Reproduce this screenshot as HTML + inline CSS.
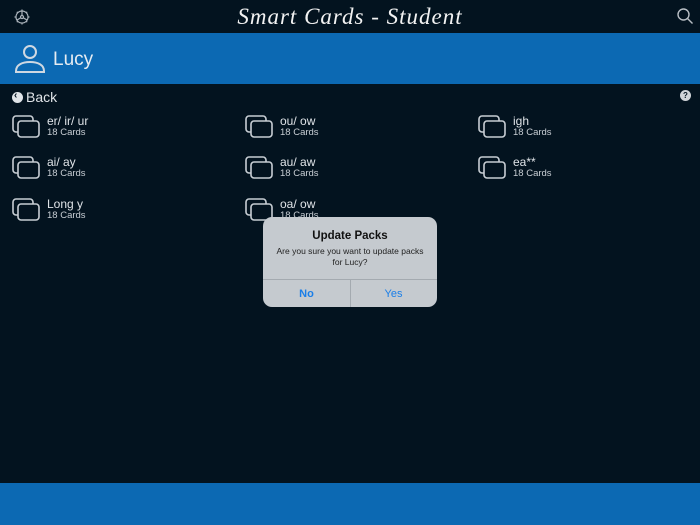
<!DOCTYPE html>
<html><head><style>
body{margin:0;width:700px;height:525px;background:#03131f;font-family:"Liberation Sans",sans-serif;position:relative;overflow:hidden;color:#d8dde2}
.a{position:absolute}
.item{position:absolute;height:30px}
.item svg{position:absolute;left:0;top:0}
.item .t{position:absolute;left:35px;top:1px;font-size:12px;color:#e0e4e8;white-space:nowrap}
.item .s{position:absolute;left:35px;top:14px;font-size:9.5px;color:#c8ced4;white-space:nowrap}
</style></head><body>
<svg class="a" style="left:13px;top:8px" width="18" height="18" viewBox="0 0 18 18" fill="none" stroke="#aab2ba" stroke-width="1.2"><circle cx="9" cy="9" r="6"/><circle cx="9" cy="9" r="1.5"/><path d="M9 3v-1.5M9 16.5V15M3 9H1.5M16.5 9H15M4.8 4.8l-1-1M14.2 14.2l-1-1M4.8 13.2l-1 1M14.2 3.8l-1 1M9 7.5L9 3M7.7 9.8L4 12M10.3 9.8L14 12"/></svg>
<div class="a" style="left:0;width:700px;top:4px;text-align:center;font-family:'Liberation Serif',serif;font-style:italic;font-size:23px;color:#f2f2f2;letter-spacing:1px">Smart Cards - Student</div>
<svg class="a" style="left:676px;top:7px" width="18" height="18" viewBox="0 0 18 18" fill="none" stroke="#b8bec4" stroke-width="1.4"><circle cx="7.5" cy="7.5" r="5.5"/><path d="M11.5 11.5l5 5"/></svg>
<div class="a" style="left:0;top:33px;width:700px;height:51px;background:#0c69b3"></div>
<svg class="a" style="left:14px;top:43px" width="32" height="32" viewBox="0 0 32 32" fill="none" stroke="#cfd8e2" stroke-width="2"><circle cx="16" cy="9" r="6"/><path d="M2 28c0-6 6-9 14-9s14 3 14 9v1H2z"/></svg>
<div class="a" style="left:53px;top:49px;font-size:19px;color:#e6ecf2">Lucy</div>
<div class="a" style="left:12px;top:92px;width:11px;height:11px;border-radius:50%;background:#e0e4e8"></div>
<div class="a" style="left:14px;top:90px;font-size:10px;color:#03131f;font-weight:bold">‹</div>
<div class="a" style="left:26px;top:89px;font-size:14px;color:#e0e4e8">Back</div>
<div class="a" style="left:680px;top:90px;width:11px;height:11px;border-radius:50%;background:#d0d4d8;color:#03131f;font-size:8px;font-weight:bold;text-align:center;line-height:11px">?</div>

<div class="item" style="left:12px;top:113px"><svg width="30" height="26" viewBox="0 0 30 26" fill="none" stroke="#c8ced4" stroke-width="1.6"><rect x="1" y="3" width="20" height="16" rx="3"/><rect x="6" y="8" width="21" height="16" rx="3" fill="#03131f"/></svg><div class="t">er/ ir/ ur</div><div class="s">18 Cards</div></div>
<div class="item" style="left:245px;top:113px"><svg width="30" height="26" viewBox="0 0 30 26" fill="none" stroke="#c8ced4" stroke-width="1.6"><rect x="1" y="3" width="20" height="16" rx="3"/><rect x="6" y="8" width="21" height="16" rx="3" fill="#03131f"/></svg><div class="t">ou/ ow</div><div class="s">18 Cards</div></div>
<div class="item" style="left:478px;top:113px"><svg width="30" height="26" viewBox="0 0 30 26" fill="none" stroke="#c8ced4" stroke-width="1.6"><rect x="1" y="3" width="20" height="16" rx="3"/><rect x="6" y="8" width="21" height="16" rx="3" fill="#03131f"/></svg><div class="t">igh</div><div class="s">18 Cards</div></div>
<div class="item" style="left:12px;top:154px"><svg width="30" height="26" viewBox="0 0 30 26" fill="none" stroke="#c8ced4" stroke-width="1.6"><rect x="1" y="3" width="20" height="16" rx="3"/><rect x="6" y="8" width="21" height="16" rx="3" fill="#03131f"/></svg><div class="t">ai/ ay</div><div class="s">18 Cards</div></div>
<div class="item" style="left:245px;top:154px"><svg width="30" height="26" viewBox="0 0 30 26" fill="none" stroke="#c8ced4" stroke-width="1.6"><rect x="1" y="3" width="20" height="16" rx="3"/><rect x="6" y="8" width="21" height="16" rx="3" fill="#03131f"/></svg><div class="t">au/ aw</div><div class="s">18 Cards</div></div>
<div class="item" style="left:478px;top:154px"><svg width="30" height="26" viewBox="0 0 30 26" fill="none" stroke="#c8ced4" stroke-width="1.6"><rect x="1" y="3" width="20" height="16" rx="3"/><rect x="6" y="8" width="21" height="16" rx="3" fill="#03131f"/></svg><div class="t">ea**</div><div class="s">18 Cards</div></div>
<div class="item" style="left:12px;top:196px"><svg width="30" height="26" viewBox="0 0 30 26" fill="none" stroke="#c8ced4" stroke-width="1.6"><rect x="1" y="3" width="20" height="16" rx="3"/><rect x="6" y="8" width="21" height="16" rx="3" fill="#03131f"/></svg><div class="t">Long y</div><div class="s">18 Cards</div></div>
<div class="item" style="left:245px;top:196px"><svg width="30" height="26" viewBox="0 0 30 26" fill="none" stroke="#c8ced4" stroke-width="1.6"><rect x="1" y="3" width="20" height="16" rx="3"/><rect x="6" y="8" width="21" height="16" rx="3" fill="#03131f"/></svg><div class="t">oa/ ow</div><div class="s">18 Cards</div></div>

<div class="a" style="left:263px;top:217px;width:174px;height:90px;border-radius:9px;background:#c5cacf;color:#111">
<div class="a" style="left:0;width:174px;top:13px;text-align:center;font-size:11.5px;font-weight:bold">Update Packs</div>
<div class="a" style="left:0;width:174px;top:29px;text-align:center;font-size:8.5px;line-height:11px;color:#222">Are you sure you want to update packs<br>for Lucy?</div>
<div class="a" style="left:0;top:62px;width:174px;height:1px;background:#a4aab0"></div>
<div class="a" style="left:87px;top:62px;width:1px;height:28px;background:#a4aab0"></div>
<div class="a" style="left:0;width:87px;top:71px;text-align:center;font-size:11px;font-weight:bold;color:#1a7ee8">No</div>
<div class="a" style="left:87px;width:87px;top:71px;text-align:center;font-size:11px;color:#1a7ee8">Yes</div>
</div>
<div class="a" style="left:0;top:483px;width:700px;height:42px;background:#0c69b3"></div>
</body></html>
